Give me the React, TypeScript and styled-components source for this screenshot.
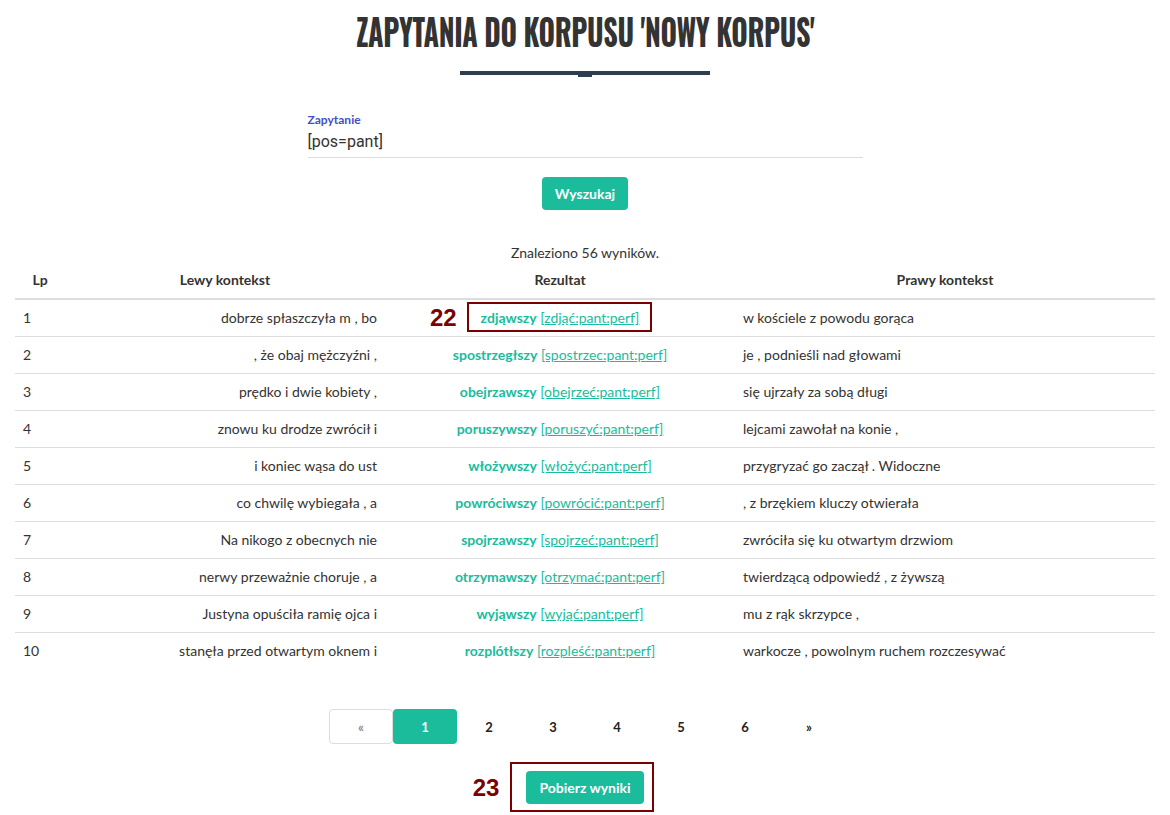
import React from "react";
import styled, { createGlobalStyle } from "styled-components";

const TEAL = "#1abc9c";
const MAROON = "#7b0000";

const GlobalStyle = createGlobalStyle`
  body {
    margin: 0;
    background: #fff;
    font-family: Lato, "Open Sans", sans-serif;
    color: #333;
  }
`;

interface Row {
  lp: number;
  left: string;
  word: string;
  tag: string;
  right: string;
}

const rows: Row[] = [
  { lp: 1, left: "dobrze spłaszczyła m , bo", word: "zdjąwszy", tag: "[zdjąć:pant:perf]", right: "w kościele z powodu gorąca" },
  { lp: 2, left: ", że obaj mężczyźni ,", word: "spostrzegłszy", tag: "[spostrzec:pant:perf]", right: "je , podnieśli nad głowami" },
  { lp: 3, left: "prędko i dwie kobiety ,", word: "obejrzawszy", tag: "[obejrzeć:pant:perf]", right: "się ujrzały za sobą długi" },
  { lp: 4, left: "znowu ku drodze zwrócił i", word: "poruszywszy", tag: "[poruszyć:pant:perf]", right: "lejcami zawołał na konie ," },
  { lp: 5, left: "i koniec wąsa do ust", word: "włożywszy", tag: "[włożyć:pant:perf]", right: "przygryzać go zaczął . Widoczne" },
  { lp: 6, left: "co chwilę wybiegała , a", word: "powróciwszy", tag: "[powrócić:pant:perf]", right: ", z brzękiem kluczy otwierała" },
  { lp: 7, left: "Na nikogo z obecnych nie", word: "spojrzawszy", tag: "[spojrzeć:pant:perf]", right: "zwróciła się ku otwartym drzwiom" },
  { lp: 8, left: "nerwy przeważnie choruje , a", word: "otrzymawszy", tag: "[otrzymać:pant:perf]", right: "twierdzącą odpowiedź , z żywszą" },
  { lp: 9, left: "Justyna opuściła ramię ojca i", word: "wyjąwszy", tag: "[wyjąć:pant:perf]", right: "mu z rąk skrzypce ," },
  { lp: 10, left: "stanęła przed otwartym oknem i", word: "rozplótłszy", tag: "[rozpleść:pant:perf]", right: "warkocze , powolnym ruchem rozczesywać" },
];

const pages = ["«", "1", "2", "3", "4", "5", "6", "»"];

const App: React.FC = () => {
  return (
    <>
      <GlobalStyle />
      <Page>
        <TitleBlock>
          <Title>ZAPYTANIA DO KORPUSU 'NOWY KORPUS'</Title>
          <Divider />
        </TitleBlock>

        <QueryField>
          <FieldLabel>Zapytanie</FieldLabel>
          <FieldValue>[pos=pant]</FieldValue>
        </QueryField>

        <PrimaryButton $top={19}>Wyszukaj</PrimaryButton>

        <Summary>Znaleziono 56 wyników.</Summary>

        <Table>
          <colgroup>
            <col style={{ width: 50 }} />
            <col style={{ width: 320 }} />
            <col style={{ width: 350 }} />
            <col style={{ width: 420 }} />
          </colgroup>
          <thead>
            <tr>
              <Th>Lp</Th>
              <Th>Lewy kontekst</Th>
              <Th>Rezultat</Th>
              <Th>Prawy kontekst</Th>
            </tr>
          </thead>
          <tbody>
            {rows.map((r, i) => {
              const result = (
                <>
                  <Word>{r.word}</Word> <Tag href="#">{r.tag}</Tag>
                </>
              );
              return (
                <tr key={r.lp}>
                  <Td>{r.lp}</Td>
                  <Td $align="right">{r.left}</Td>
                  <Td $align="center">
                    {i === 0 ? (
                      <Marked>
                        <MarkLabel $offset={24}>22</MarkLabel>
                        <MarkBox $inset="-6px -13px -4px -14px" />
                        {result}
                      </Marked>
                    ) : (
                      result
                    )}
                  </Td>
                  <Td $align="left">{r.right}</Td>
                </tr>
              );
            })}
          </tbody>
        </Table>

        <Pagination>
          {pages.map((p, i) => (
            <PageItem key={p} $active={p === "1"} $bordered={i === 0}>
              {p}
            </PageItem>
          ))}
        </Pagination>

        <Footer>
          <Marked>
            <MarkLabel $offset={27}>23</MarkLabel>
            <MarkBox $inset="-9px -10px -8px -16px" />
            <PrimaryButton>Pobierz wyniki</PrimaryButton>
          </Marked>
        </Footer>
      </Page>
    </>
  );
};

const Page = styled.div`
  width: 1140px;
  padding: 0 15px;
  display: flex;
  flex-direction: column;
  align-items: center;
  height: 815px;
  overflow: hidden;
`;

const TitleBlock = styled.div`
  display: flex;
  flex-direction: column;
  align-items: center;
  padding-top: 9px;
`;

const Title = styled.h1`
  margin: 0;
  font-family: "Oswald", "Liberation Sans Narrow", "DejaVu Sans Condensed", sans-serif;
  font-weight: 700;
  font-size: 38px;
  line-height: 42px;
  color: #333;
  letter-spacing: -0.5px;
  transform: scaleX(0.743);
  white-space: nowrap;
`;

const Divider = styled.div`
  position: relative;
  width: 250px;
  height: 4px;
  margin-top: 20px;
  background: #2c3e50;

  &::after {
    content: "";
    position: absolute;
    left: 118px;
    top: 4px;
    width: 14px;
    height: 2px;
    background: #2c3e50;
  }
`;

const QueryField = styled.div`
  width: 555px;
  margin-top: 37px;
  border-bottom: 1px solid #ddd;
  padding-bottom: 4px;
`;

const FieldLabel = styled.div`
  font-size: 12px;
  font-weight: 700;
  line-height: 16px;
  color: #4051c4;
`;

const FieldValue = styled.div`
  margin-top: 3px;
  font-family: Roboto, "Liberation Sans", sans-serif;
  font-size: 16px;
  line-height: 22px;
  color: #333;
`;

const PrimaryButton = styled.button<{ $top?: number }>`
  border: none;
  border-radius: 4px;
  background: ${TEAL};
  color: #fff;
  font-family: Lato, sans-serif;
  font-weight: 700;
  font-size: 14px;
  height: 33px;
  padding: 0 13px;
  cursor: pointer;
  margin-top: ${(p) => p.$top ?? 0}px;
`;

const Summary = styled.div`
  margin-top: 33px;
  font-size: 14px;
  line-height: 20px;
`;

const Table = styled.table`
  width: 1140px;
  margin-top: 3px;
  border-collapse: collapse;
  table-layout: fixed;
  font-size: 14px;
`;

const Th = styled.th`
  padding: 4px 8px 8px;
  line-height: 20px;
  font-weight: 700;
  text-align: center;
  border-bottom: 2px solid #ddd;
`;

const Td = styled.td<{ $align?: "left" | "right" | "center" }>`
  padding: 8px;
  line-height: 20px;
  text-align: ${(p) => p.$align || "left"};
  white-space: nowrap;
  tr:not(:last-child) > & {
    border-bottom: 1px solid #ddd;
  }
`;

const Word = styled.b`
  color: ${TEAL};
  font-weight: 700;
`;

const Tag = styled.a`
  color: ${TEAL};
  text-decoration: underline;
`;

const Marked = styled.span`
  position: relative;
  display: inline-block;
`;

const MarkBox = styled.span<{ $inset: string }>`
  position: absolute;
  inset: ${(p) => p.$inset};
  border: 2px solid ${MAROON};
  pointer-events: none;
`;

const MarkLabel = styled.span<{ $offset: number }>`
  position: absolute;
  right: 100%;
  margin-right: ${(p) => p.$offset}px;
  top: 50%;
  transform: translateY(-50%);
  font-family: "Liberation Sans", Arial, sans-serif;
  font-weight: 700;
  font-size: 24px;
  color: ${MAROON};
`;

const Pagination = styled.div`
  display: flex;
  margin-top: 40px;
`;

const PageItem = styled.div<{ $active?: boolean; $bordered?: boolean }>`
  width: 64px;
  height: 35px;
  box-sizing: border-box;
  display: flex;
  align-items: center;
  justify-content: center;
  font-size: 13px;
  font-weight: 700;
  border-radius: 4px;
  color: ${(p) => (p.$active ? "#fff" : p.$bordered ? "#8a8a8a" : "#222")};
  background: ${(p) => (p.$active ? TEAL : "transparent")};
  border: ${(p) => (p.$bordered ? "1px solid #ddd" : "none")};
`;

const Footer = styled.div`
  margin-top: 27px;
  display: flex;
  justify-content: center;
`;

export default App;
